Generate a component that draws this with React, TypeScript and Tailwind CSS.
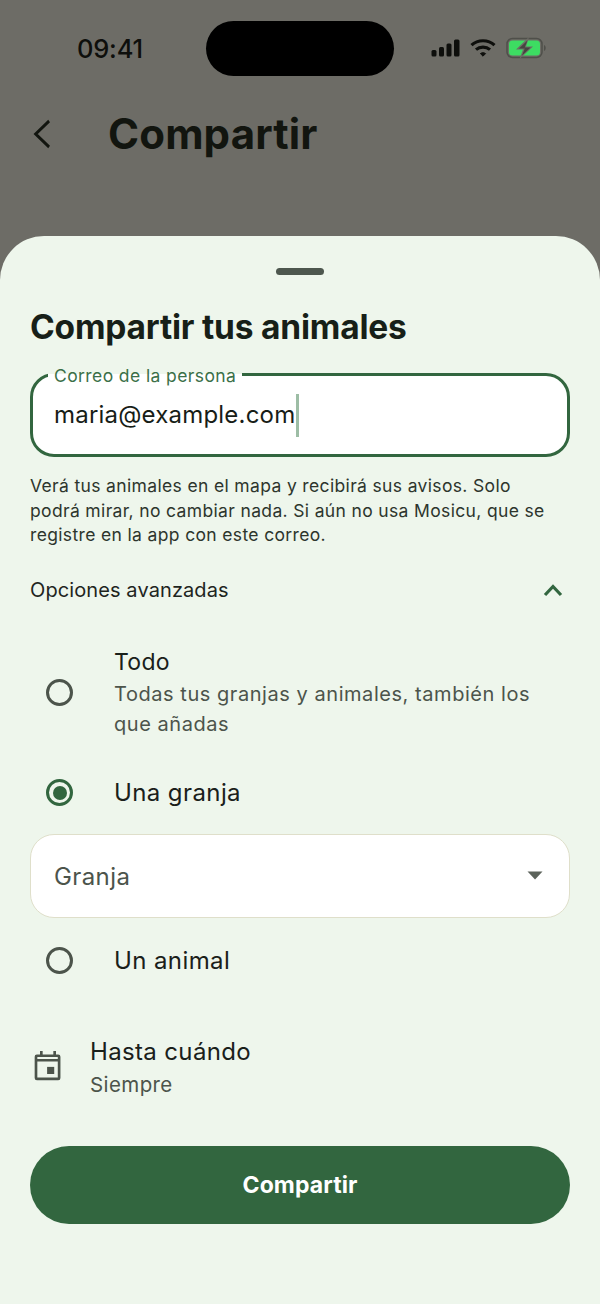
import React from 'react';

const font = { fontFamily: 'Inter, "Liberation Sans", sans-serif' };

function StatusIcons() {
  return (
    <div className="flex items-center gap-[9px]">
      {/* signal */}
      <svg width="30" height="18" viewBox="0 0 30 18" fill="#0e0f0c">
        <rect x="0.5" y="11" width="5" height="6.5" rx="1.5" />
        <rect x="8" y="8" width="5" height="9.5" rx="1.5" />
        <rect x="15.5" y="4.5" width="5" height="13" rx="1.5" />
        <rect x="23" y="0.5" width="5.5" height="17" rx="1.5" />
      </svg>
      {/* wifi */}
      <svg width="26" height="20" viewBox="0 0 26 20" fill="none" stroke="#0e0f0c" strokeWidth="3.1">
        <path d="M1.5 7.2C7.8 1.2 18.2 1.2 24.5 7.2" />
        <path d="M6 11.7C9.9 8.2 16.1 8.2 20 11.7" />
        <path d="M10.4 15.6L13 18.2L15.6 15.6C14.2 14.4 11.8 14.4 10.4 15.6Z" fill="#0e0f0c" strokeWidth="1" />
      </svg>
      {/* battery charging */}
      <svg width="40" height="22" viewBox="0 0 40 22" className="ml-px">
        <rect x="1" y="1.5" width="35" height="19" rx="5.5" fill="#6d6c66" stroke="#4f4f4a" strokeWidth="1.5" />
        <rect x="3" y="3.5" width="31" height="15" rx="3.5" fill="#3ddc62" />
        <path d="M38 8v6c1.2-.5 1.7-1.7 1.7-3s-.5-2.5-1.7-3Z" fill="#4f4f4a" />
        <path d="M23 0L10 12.5H17L13.5 22L27 9.5H20Z" fill="#6d6c66" />
        <path d="M21.5 3.5L13 11.5H18.8L16 18.5L24.5 10.5H18.6Z" fill="#45453f" />
      </svg>
    </div>
  );
}

function Radio({ checked }: { checked?: boolean }) {
  return (
    <span
      className={`flex h-[27px] w-[27px] shrink-0 items-center justify-center rounded-full border-[3px] ${
        checked ? 'border-[#32663f]' : 'border-[#4c544b]'
      }`}
    >
      {checked && <span className="h-[14px] w-[14px] rounded-full bg-[#32663f]" />}
    </span>
  );
}

export default function App() {
  return (
    <div className="flex h-[1304px] w-[600px] flex-col overflow-hidden bg-[#6d6c66] text-[#171d17]" style={font}>
      {/* Status bar */}
      <div className="flex h-[76px] items-center pt-[21px] pl-[77px]">
        <span className="w-[129px] text-[25.5px] font-medium leading-none tracking-[-0.2px] text-[#0e0f0c]">09:41</span>
        <div className="h-[55px] w-[188px] rounded-full bg-black" />
        <div className="ml-[37px] mb-[2px]">
          <StatusIcons />
        </div>
      </div>

      {/* Header */}
      <div className="flex h-[160px] shrink-0 items-start pl-[32px] pt-[41px]">
        <svg width="22" height="32" viewBox="0 0 22 32" fill="none" stroke="#12150f" strokeWidth="3" className="mt-[1px]">
          <path d="M19 3L4 16L19 29" transform="scale(0.9 1)" />
        </svg>
        <h1 className="ml-[54px] text-[42px] font-bold leading-[34px] tracking-[0.15px] text-[#12150f]">Compartir</h1>
      </div>

      {/* Bottom sheet */}
      <div className="flex flex-1 flex-col rounded-t-[44px] bg-[#eef6ec] px-[30px]">
        <div className="mx-auto mt-[32px] h-[7px] w-[48px] rounded-full bg-[#4d574e]" />

        <h2 className="mt-[32px] text-[33.5px] font-bold leading-[40px] tracking-[-0.2px] text-[#171f18]">Compartir tus animales</h2>

        {/* Email field */}
        <div className="relative mt-[26px] flex h-[84px] items-center rounded-[24px] border-[3px] border-[#32663f] bg-white px-[21px]">
          <span className="absolute -top-[10px] left-[15px] bg-[linear-gradient(to_bottom,#eef6ec_40%,#fff_40%)] px-[6px] text-[17.5px] leading-[20px] tracking-[0.4px] text-[#3b7048]">
            Correo de la persona
          </span>
          <span className="text-[24px] tracking-[0.2px] text-[#171d17]">maria@example.com</span>
          <span className="ml-[1px] h-[43px] w-[3px] bg-[#9dbda5]" />
        </div>

        <p className="mt-[17px] max-w-[525px] text-[17.5px] leading-[24.5px] tracking-[0.35px] text-[#2d352d]">
          Verá tus animales en el mapa y recibirá sus avisos. Solo podrá mirar, no cambiar nada. Si aún no usa Mosicu, que se registre en la app con este correo.
        </p>

        {/* Advanced options */}
        <div className="mt-[17px] flex h-[50px] items-center justify-between pr-[7px]">
          <span className="text-[20px] tracking-[0.1px] text-[#1e251e]">Opciones avanzadas</span>
          <svg width="20" height="14" viewBox="0 0 20 14" fill="none" stroke="#32663f" strokeWidth="3.2">
            <path d="M2 12L10 3.5L18 12" />
          </svg>
        </div>

        <div className="mt-[32px] flex items-center pl-[16px]">
          <Radio />
          <div className="ml-[41px] max-w-[430px]">
            <div className="text-[23px] leading-[30px] tracking-[0.3px] text-[#1a201a]">Todo</div>
            <div className="mt-[2px] text-[20px] leading-[30px] tracking-[0.55px] text-[#4c544b]">
              Todas tus granjas y animales, también los que añadas
            </div>
          </div>
        </div>

        <div className="mt-[32px] flex h-[44px] items-center pl-[16px]">
          <Radio checked />
          <span className="ml-[41px] text-[24px] tracking-[0.4px] text-[#1a201a]">Una granja</span>
        </div>

        {/* Select */}
        <div className="mt-[19px] flex h-[84px] items-center justify-between rounded-[24px] border-[1.5px] border-[#dfdfca] bg-white pl-[23px] pr-[26px]">
          <span className="pt-[2px] text-[24px] tracking-[0.4px] text-[#4c544b]">Granja</span>
          <svg width="16" height="9" viewBox="0 0 16 9" fill="#5c635b">
            <path d="M0.5 0.5H15.5L8 8.5Z" />
          </svg>
        </div>

        <div className="mt-[21px] flex h-[44px] items-center pl-[16px]">
          <Radio />
          <span className="ml-[41px] text-[24px] tracking-[0.4px] text-[#1a201a]">Un animal</span>
        </div>

        {/* Until when */}
        <div className="mt-[53px] flex items-center pl-[4px]">
          <svg width="28" height="32" viewBox="0 0 30 36" fill="#4c544b" className="mb-[4px]">
            <path d="M6 1h3v4h12V1h3v4h2.5A2.5 2.5 0 0 1 29 7.5v24a2.5 2.5 0 0 1-2.5 2.5h-24A2.5 2.5 0 0 1 0 31.5v-24A2.5 2.5 0 0 1 2.5 5H6ZM3 13v18h23V13Zm0-5v2h23V8Z" fillRule="evenodd" />
            <rect x="14" y="19" width="8" height="8" />
          </svg>
          <div className="ml-[28px]">
            <div className="text-[24px] leading-[32px] tracking-[0.35px] text-[#1a201a]">Hasta cuándo</div>
            <div className="mt-[1px] text-[20.5px] leading-[32px] tracking-[0.4px] text-[#4c544b]">Siempre</div>
          </div>
        </div>

        {/* Submit */}
        <button className="mt-[45px] flex h-[78px] w-full shrink-0 items-center justify-center rounded-full bg-[#32663f] pt-[1px] text-[23px] font-bold tracking-[0.1px] text-white">
          Compartir
        </button>
      </div>
    </div>
  );
}
